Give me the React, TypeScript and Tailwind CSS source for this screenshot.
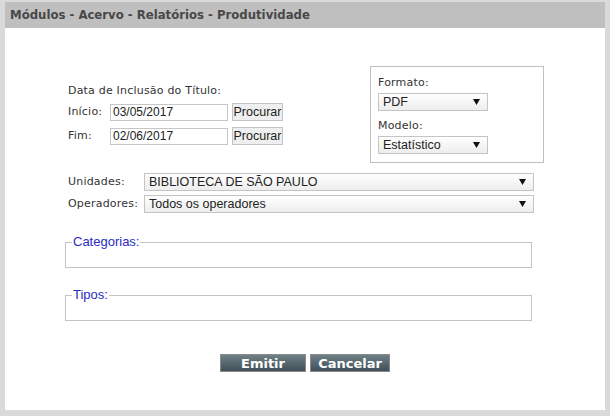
const labelFont = "font-['DejaVu_Sans',Verdana,sans-serif] tracking-[0.2px]";
const fieldFont = "font-['Liberation_Sans',Arial,sans-serif] tracking-normal";

function Arrow() {
  return (
    <svg width="7" height="6" viewBox="0 0 7 6" className="shrink-0">
      <path d="M0 0h7L3.5 6z" fill="#111" />
    </svg>
  );
}

function Select({ value, width }: { value: string; width: string }) {
  return (
    <div
      className={`${width} h-[18px] flex items-center justify-between pl-[4px] pr-[7px] border border-[#c4c4c4] bg-gradient-to-b from-white to-[#ededed] text-[12.5px] text-[#222] ${fieldFont}`}
    >
      <span className="leading-none">{value}</span>
      <Arrow />
    </div>
  );
}

function DateRow({ label, value }: { label: string; value: string }) {
  return (
    <div className="flex items-center">
      <span className="w-[42px] text-[11px] text-[#333]">{label}</span>
      <div
        className={`w-[118px] h-[17px] border border-[#c6c6c6] bg-white pl-[2px] flex items-center text-[12px] text-[#222] ${fieldFont}`}
      >
        {value}
      </div>
      <button
        className={`ml-[4px] w-[51px] h-[18px] border border-[#c3c3c3] bg-[#efefef] text-[12.5px] leading-none text-[#222] flex items-center justify-center ${fieldFont}`}
      >
        Procurar
      </button>
    </div>
  );
}

function Group({ title }: { title: string }) {
  return (
    <fieldset className="w-[467px] border border-[#c4c4c4] px-[6px]">
      <legend className={`px-[1px] text-[13px] leading-[14px] text-[#2a2ac4] ${fieldFont}`}>{title}</legend>
      <div className="h-[18px]" />
    </fieldset>
  );
}

export default function App() {
  return (
    <div className="w-[610px] h-[416px] bg-[#dadada] pt-[2px] pl-[5px] pr-[5px] pb-[6px] flex flex-col">
      <div
        className={`h-[26px] shrink-0 bg-[#bfbfbf] pl-[5px] flex items-center text-[13px] font-bold text-[#484848] font-['DejaVu_Sans_Condensed','DejaVu_Sans',sans-serif]`}
      >
        Módulos - Acervo - Relatórios - Produtividade
      </div>
      <div className={`flex-1 bg-white pl-[60px] ${labelFont}`}>
        <div className="flex items-start mt-[38px]">
          <div className="ml-[3px] mt-[18px] flex flex-col">
            <span className="text-[11px] leading-[13px] text-[#333]">Data de Inclusão do Título:</span>
            <div className="mt-[6px] flex flex-col gap-[6px]">
              <DateRow label="Início:" value="03/05/2017" />
              <DateRow label="Fim:" value="02/06/2017" />
            </div>
          </div>
          <div className="ml-auto mr-[61px] w-[174px] h-[97px] border border-[#c0c0c0] px-[7px] pt-[9px]">
            <div className="text-[11px] leading-[13px] text-[#333]">Formato:</div>
            <div className="mt-[4px]">
              <Select value="PDF" width="w-[110px]" />
            </div>
            <div className="mt-[8px] text-[11px] leading-[13px] text-[#333]">Modelo:</div>
            <div className="mt-[4px]">
              <Select value="Estatístico" width="w-[110px]" />
            </div>
          </div>
        </div>
        <div className="mt-[10px] ml-[3px] flex flex-col gap-[4px]">
          <div className="flex items-center">
            <span className="w-[76px] text-[11px] text-[#333]">Unidades:</span>
            <Select value="BIBLIOTECA DE SÃO PAULO" width="w-[390px]" />
          </div>
          <div className="flex items-center">
            <span className="w-[76px] text-[11px] text-[#333]">Operadores:</span>
            <Select value="Todos os operadores" width="w-[390px]" />
          </div>
        </div>
        <div className="mt-[22px] flex flex-col gap-[20px]">
          <Group title="Categorias:" />
          <Group title="Tipos:" />
        </div>
        <div className="mt-[33px] -ml-[60px] flex justify-center gap-[4px] tracking-normal">
          <button className="w-[86px] h-[18px] border border-[#8a8a8a] bg-gradient-to-b from-[#6f8087] to-[#3f5058] text-white font-bold text-[13px] leading-none">
            Emitir
          </button>
          <button className="w-[80px] h-[18px] border border-[#8a8a8a] bg-gradient-to-b from-[#6f8087] to-[#3f5058] text-white font-bold text-[13px] leading-none">
            Cancelar
          </button>
        </div>
      </div>
    </div>
  );
}
